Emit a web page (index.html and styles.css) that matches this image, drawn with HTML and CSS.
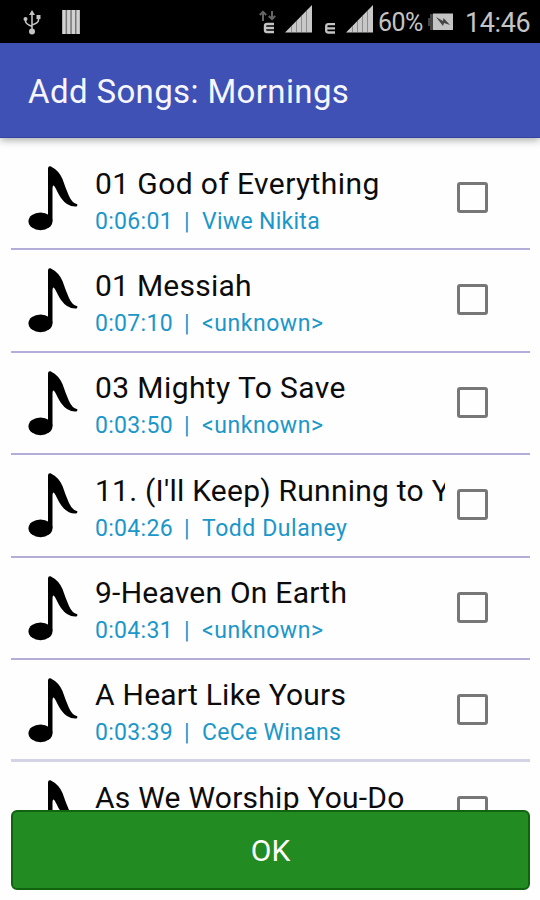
FILE: index.html
```html
<!DOCTYPE html>
<html lang="en">
<head>
<meta charset="utf-8">
<title>Add Songs</title>
<link rel="stylesheet" href="styles.css">
</head>
<body>
<svg class="defs" width="0" height="0">
  <symbol id="note" viewBox="0 0 50 66">
    <path d="M20 3.500Q20 .8 22.500 1.200Q31 5.500 34.500 14Q37.500 23 41 31Q44 38 49.300 39.300Q49.800 41.800 47 41.600Q39 41.500 33 33C28.500 26 27.500 21.500 25.500 20.500Q24.500 20.500 24.500 24V56H20Z"/>
    <ellipse cx="12.500" cy="56.300" rx="12" ry="8.900"/>
  </symbol>
  <symbol id="signal" viewBox="0 0 28 28">
    <path fill="#c8c8c8" d="M0 27.500 27 0V27.500Z"/>
    <path stroke="#8d8d8d" stroke-width="1" d="M6.500 21V27M11.500 16V27M16.500 11V27M21.500 6V27"/>
  </symbol>
</svg>
<div class="screen">
  <header class="status">
    <svg class="usb" viewBox="0 0 18 25" fill="none" stroke="#c4c4c4" stroke-width="1.600">
      <path d="M9 4V20M2.500 9V11Q2.500 14 9 16.500M15.500 7V10Q15.500 13 9 15"/>
      <path fill="#c4c4c4" stroke="none" d="M9 0 12 5H6Z"/>
      <circle cx="9" cy="21.500" r="3" fill="#c4c4c4" stroke="none"/>
      <circle cx="2.500" cy="9" r="2" fill="#c4c4c4" stroke="none"/>
      <path fill="#c4c4c4" stroke="none" d="M13.500 5H17.500V9H13.500Z"/>
    </svg>
    <svg class="bars" viewBox="0 0 18 24"><path fill="#777" d="M0 0H18V24H0Z"/><path stroke="#d2d2d2" stroke-width="3.200" d="M2 0V24M6.700 0V24M11.400 0V24M16.100 0V24"/></svg>
    <svg class="edge" viewBox="0 0 18 24" fill="none">
      <path stroke="#666" stroke-width="2" d="M4 11V2M.8 5 4 1.800 7.200 5M13 1V9M9.800 6 13 9.200 16.200 6"/>
      <path stroke="#c4c4c4" stroke-width="2.400" d="M15 14H8Q6 14 6 16V20Q6 22 8 22H15M6 18H15"/>
    </svg>
    <svg class="signal one"><use href="#signal"/></svg>
    <svg class="edge small" viewBox="0 0 10 11" fill="none"><path stroke="#c4c4c4" stroke-width="2.300" d="M10 1.200H3.500Q1.200 1.200 1.200 3.500V7.500Q1.200 9.500 3.500 9.500H10M1 5.400H10"/></svg>
    <svg class="signal two"><use href="#signal"/></svg>
    <span class="percent">60%</span>
    <svg class="battery" viewBox="0 0 25 18"><path fill="#444" d="M0 5H2V1H5V17H2V13H0Z"/><path fill="#c4c4c4" d="M5 .5H25V17H5Z"/><path fill="#444" d="M8 4 15 8 15.500 5 22 12 16 10 15 13Z"/></svg>
    <span class="clock">14:46</span>
  </header>
  <div class="appbar"><h1>Add Songs: Mornings</h1></div>
  <main class="list">
    <div class="row wide"><svg class="note"><use href="#note"/></svg><div class="text"><div class="title"><span>01 God of Everything</span></div><div class="meta"><span class="time">0:06:01</span><span class="bar">|</span><span>Viwe Nikita</span></div></div><i class="check"></i></div>
    <div class="row"><svg class="note"><use href="#note"/></svg><div class="text"><div class="title"><span>01 Messiah</span></div><div class="meta"><span class="time">0:07:10</span><span class="bar">|</span><span class="loose">&lt;unknown&gt;</span></div></div><i class="check"></i></div>
    <div class="row wide"><svg class="note"><use href="#note"/></svg><div class="text"><div class="title"><span>03 Mighty To Save</span></div><div class="meta"><span class="time">0:03:50</span><span class="bar">|</span><span class="loose">&lt;unknown&gt;</span></div></div><i class="check"></i></div>
    <div class="row"><svg class="note"><use href="#note"/></svg><div class="text"><div class="title"><span>11. (I'll Keep) Running to Y</span></div><div class="meta"><span class="time">0:04:26</span><span class="bar">|</span><span class="loose">Todd Dulaney</span></div></div><i class="check"></i></div>
    <div class="row"><svg class="note"><use href="#note"/></svg><div class="text"><div class="title"><span>9-Heaven On Earth</span></div><div class="meta"><span class="time">0:04:31</span><span class="bar">|</span><span class="loose">&lt;unknown&gt;</span></div></div><i class="check"></i></div>
    <div class="row thick"><svg class="note"><use href="#note"/></svg><div class="text"><div class="title"><span>A Heart Like Yours</span></div><div class="meta"><span class="time">0:03:39</span><span class="bar">|</span><span>CeCe Winans</span></div></div><i class="check"></i></div>
    <div class="row"><svg class="note"><use href="#note"/></svg><div class="text"><div class="title"><span>As We Worship You-Do</span></div></div><i class="check"></i></div>
  </main>
  <button class="ok">OK</button>
</div>
</body>
</html>
```
FILE: styles.css
```css
* { box-sizing: border-box; }
body { margin: 0; background: #fefefe; font-family: Roboto, "Liberation Sans", sans-serif; }
.defs { display: block; }
.screen { width: 540px; height: 900px; overflow: hidden; display: flex; flex-direction: column; }
.status { height: 43px; flex: none; background: #000; color: #c4c4c4; display: flex; align-items: flex-start; }
.status svg { flex: none; }
.usb { width: 18px; height: 25px; margin: 10px 0 0 23px; }
.bars { width: 18px; height: 24px; margin: 10px 0 0 21px; }
.edge { width: 18px; height: 24px; margin: 10px 0 0 179px; }
.signal { width: 28px; height: 28px; margin-top: 5px; }
.signal.one { margin-left: 8px; }
.edge.small { width: 10px; height: 11px; margin: 23px 0 0 12px; }
.signal.two { margin-left: 11px; }
.percent { width: 50px; margin-left: 4px; font-size: 25px; line-height: 46px; letter-spacing: -.5px; white-space: nowrap; }
.battery { width: 25px; height: 18px; margin-top: 13px; }
.clock { margin-left: 12px; font-size: 27px; line-height: 46px; letter-spacing: -.4px; white-space: nowrap; }
.appbar { height: 95px; flex: none; padding-left: 28px; background: #3f51b5; border-bottom: 1px solid #3546a0; box-shadow: 0 2px 8px rgba(0,0,0,.35); }
.appbar h1 { margin: 0; color: #f5f6ff; font-weight: 400; font-size: 33px; line-height: 97px; letter-spacing: .37px; white-space: nowrap; }
.list { flex: 1; min-height: 0; overflow: hidden; padding: 10px 10px 0 11px; }
.row { height: 102.400px; padding: 0 42px 0 17px; border-bottom: 2px solid #b3aed9; display: flex; align-items: flex-start; }
.row.thick { border-bottom: 3px solid #d3d3e6; }
.note { width: 50px; height: 66px; flex: none; margin-top: 17px; }
.text { width: 350px; margin: 16.500px 0 0 17px; overflow: hidden; flex: none; white-space: nowrap; }
.title { color: #0c0c0c; font-size: 30px; line-height: 38px; letter-spacing: .24px; }
.wide .title { letter-spacing: .4px; }
.meta { color: #1b97c9; font-size: 23px; line-height: 37px; letter-spacing: .3px; display: flex; }
.loose { letter-spacing: .55px; }
.time { width: 89px; }
.bar { width: 18px; }
.check { width: 31px; height: 31px; flex: none; margin: 34px 0 0 12px; border: 3px solid #777; border-radius: 3px; }
.ok { height: 80px; flex: none; margin: 0 10px 10px 11px; border: 2px solid #10640f; border-radius: 6px; background: #228b22; color: #fff; font: 30px/77px Roboto, "Liberation Sans", sans-serif; padding: 0; }
```
